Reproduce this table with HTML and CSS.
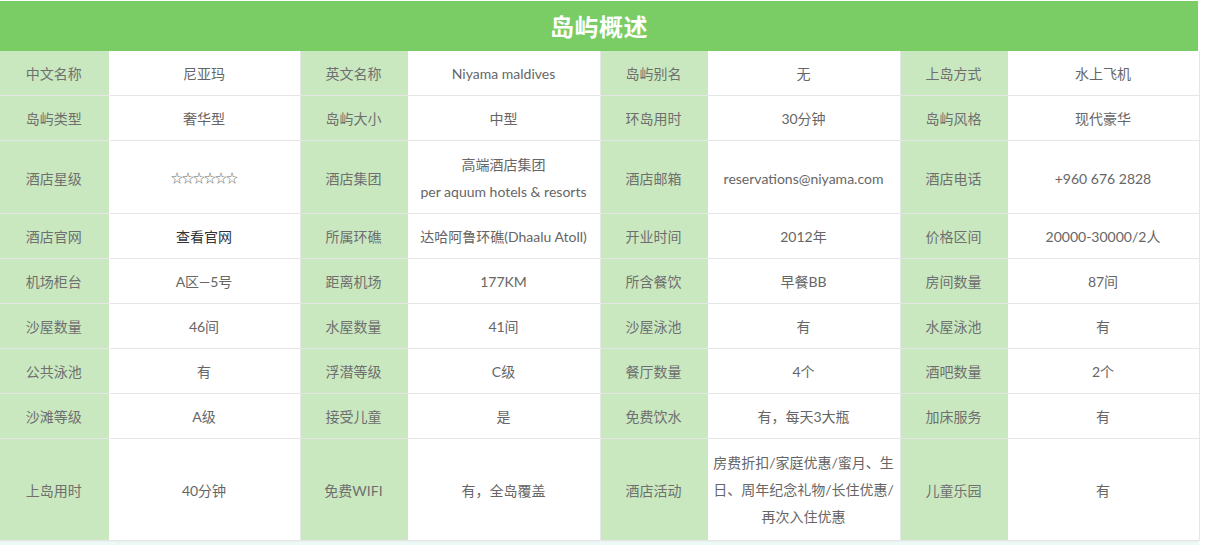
FILE: index.html
```html
<!DOCTYPE html>
<html lang="zh-CN">
<head>
<meta charset="utf-8">
<title>岛屿概述</title>
<link rel="stylesheet" href="styles.css">
</head>
<body>
<div class="wrap">
  <div class="title">岛屿概述</div>
  <table class="info">
    <colgroup>
      <col class="c-l1"><col class="c-v1"><col class="c-l2"><col class="c-v2"><col class="c-l3"><col class="c-v3"><col class="c-l4"><col class="c-v4">
    </colgroup>
    <tr>
      <td class="lb">中文名称</td><td>尼亚玛</td>
      <td class="lb">英文名称</td><td>Niyama maldives</td>
      <td class="lb">岛屿别名</td><td>无</td>
      <td class="lb">上岛方式</td><td>水上飞机</td>
    </tr>
    <tr>
      <td class="lb">岛屿类型</td><td>奢华型</td>
      <td class="lb">岛屿大小</td><td>中型</td>
      <td class="lb">环岛用时</td><td>30分钟</td>
      <td class="lb">岛屿风格</td><td>现代豪华</td>
    </tr>
    <tr class="tall">
      <td class="lb">酒店星级</td><td class="stars">☆☆☆☆☆☆</td>
      <td class="lb">酒店集团</td><td>高端酒店集团<br>per aquum hotels &amp; resorts</td>
      <td class="lb">酒店邮箱</td><td>reservations@niyama.com</td>
      <td class="lb">酒店电话</td><td>+960 676 2828</td>
    </tr>
    <tr>
      <td class="lb">酒店官网</td><td class="link">查看官网</td>
      <td class="lb">所属环礁</td><td>达哈阿鲁环礁(Dhaalu Atoll)</td>
      <td class="lb">开业时间</td><td>2012年</td>
      <td class="lb">价格区间</td><td>20000-30000/2人</td>
    </tr>
    <tr>
      <td class="lb">机场柜台</td><td>A区—5号</td>
      <td class="lb">距离机场</td><td>177KM</td>
      <td class="lb">所含餐饮</td><td>早餐BB</td>
      <td class="lb">房间数量</td><td>87间</td>
    </tr>
    <tr>
      <td class="lb">沙屋数量</td><td>46间</td>
      <td class="lb">水屋数量</td><td>41间</td>
      <td class="lb">沙屋泳池</td><td>有</td>
      <td class="lb">水屋泳池</td><td>有</td>
    </tr>
    <tr>
      <td class="lb">公共泳池</td><td>有</td>
      <td class="lb">浮潜等级</td><td>C级</td>
      <td class="lb">餐厅数量</td><td>4个</td>
      <td class="lb">酒吧数量</td><td>2个</td>
    </tr>
    <tr>
      <td class="lb">沙滩等级</td><td>A级</td>
      <td class="lb">接受儿童</td><td>是</td>
      <td class="lb">免费饮水</td><td>有，每天3大瓶</td>
      <td class="lb">加床服务</td><td>有</td>
    </tr>
    <tr>
      <td class="lb">上岛用时</td><td>40分钟</td>
      <td class="lb">免费WIFI</td><td>有，全岛覆盖</td>
      <td class="lb">酒店活动</td><td class="wrapcell">房费折扣/家庭优惠/蜜月、生日、周年纪念礼物/长住优惠/再次入住优惠</td>
      <td class="lb">儿童乐园</td><td>有</td>
    </tr>
  </table>
  <div class="after"><div class="after-l"></div><div class="after-r"></div></div>
</div>
</body>
</html>
```

FILE: styles.css
```css
html, body {
  margin: 0;
  padding: 0;
  background: #ffffff;
}
body {
  font-family: "Lato", "Noto Sans CJK SC", "Noto Sans", sans-serif;
  font-size: 14px;
  color: #666;
}
.wrap {
  width: 1199px;
  padding-top: 1px;
}
.title {
  width: 1198px;
  height: 50px;
  background: #7acc65;
  color: #fff;
  font-family: "Noto Sans CJK SC", sans-serif;
  font-size: 24px;
  font-weight: bold;
  line-height: 50px;
  text-align: center;
  letter-spacing: 0.5px;
}
.info {
  width: 1199px;
  border-collapse: collapse;
  table-layout: fixed;
}
.c-l1 { width: 108px; }
.c-v1 { width: 192px; }
.c-l2 { width: 107px; }
.c-v2 { width: 193px; }
.c-l3 { width: 107px; }
.c-v3 { width: 193px; }
.c-l4 { width: 107px; }
.c-v4 { width: 192px; }
.info td {
  border: 1px solid #e6e6e6;
  border-top: 0;
  text-align: center;
  vertical-align: middle;
  padding: 9px 0 8px;
  line-height: 27px;
  color: #666;
}
.info tr.tall td {
  padding: 10px 0 8px;
  line-height: 27px;
}
.info td:first-child {
  border-left: 0;
}
.info td.lb {
  background: #c9e8c0;
  color: #6f6f6f;
  border-left-color: #c9e8c0;
  border-right-color: #c9e8c0;
}
.info td.stars {
  font-size: 12px;
  letter-spacing: -1px;
  color: #666;
}
.info td.link {
  color: #333;
}
.info td.wrapcell {
  padding: 10px 3px;
  line-height: 27px;
}
.after {
  display: flex;
  height: 5px;
  border-top: 1px solid #e6f2ef;
}
.after-l {
  width: 118px;
  background: #eef8f6;
  border-right: 1px solid #e3ecea;
}
.after-r {
  flex: 1;
  background: #eef8f6;
}
```
